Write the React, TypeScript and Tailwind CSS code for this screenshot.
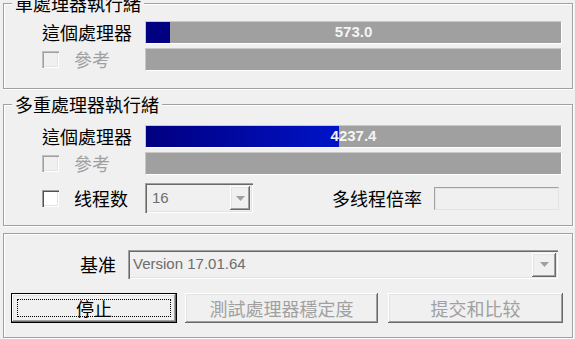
import type { ReactNode } from 'react';

const cjk = "font-['Noto_Sans_CJK_TC','Noto_Sans_CJK_SC',sans-serif]";
const latin = "font-['Liberation_Sans',Arial,sans-serif]";

const etched = 'border border-[#a0a0a0] shadow-[inset_1px_1px_0_#fff,1px_1px_0_#fff]';
const sunken =
  'shadow-[inset_1px_1px_0_#a0a0a0,inset_2px_2px_0_#696969,inset_-1px_-1px_0_#fff,inset_-2px_-2px_0_#e3e3e3]';
const raised =
  'shadow-[inset_-1px_-1px_0_#696969,inset_1px_1px_0_#fff,inset_-2px_-2px_0_#a0a0a0,inset_2px_2px_0_#e3e3e3]';

function Group({ title, className, children }: { title: string; className: string; children: ReactNode }) {
  return (
    <div className={`relative ml-[3px] w-[570px] ${etched} ${className}`}>
      <span className={`absolute left-[8px] top-[-10px] bg-[#f0f0f0] px-[3px] text-[18px] leading-[18px] text-black ${cjk}`}>
        {title}
      </span>
      {children}
    </div>
  );
}

function Bar({ value, pct, gradient }: { value?: string; pct?: number; gradient?: boolean }) {
  return (
    <div className="relative h-[23px] w-[417px] border border-t-[#c8c8c8] border-l-[#c8c8c8] border-r-white border-b-white bg-[#a0a0a0]">
      {pct ? (
        <div
          className={`absolute inset-y-0 left-0 ${gradient ? 'bg-gradient-to-r from-[#000080] to-[#0014c8]' : 'bg-[#000080]'}`}
          style={{ width: `${pct}%` }}
        />
      ) : null}
      {value ? (
        <span className={`absolute inset-0 flex items-center justify-center text-[15px] font-bold text-[#f4f4f4] ${latin}`}>
          {value}
        </span>
      ) : null}
    </div>
  );
}

function Check({ enabled }: { enabled?: boolean }) {
  return (
    <div
      className={`h-[17px] w-[17px] ${enabled ? 'bg-white' : 'bg-[#f0f0f0]'} ${
        enabled
          ? 'shadow-[inset_1px_1px_0_#a0a0a0,inset_2px_2px_0_#505050,inset_-1px_-1px_0_#fff,inset_-2px_-2px_0_#e3e3e3]'
          : 'shadow-[inset_1px_1px_0_#c0c0c0,inset_2px_2px_0_#a0a0a0,inset_-1px_-1px_0_#fff,inset_-2px_-2px_0_#e3e3e3]'
      }`}
    />
  );
}

function DropButton({ className }: { className: string }) {
  return (
    <div className={`flex items-center justify-center bg-[#f0f0f0] ${raised} ${className}`}>
      <svg width="9" height="5" viewBox="0 0 9 5">
        <polygon points="0,0 9,0 4.5,5" fill="#a0a0a0" />
      </svg>
    </div>
  );
}

function ProcRows({ value, pct, gradient }: { value: string; pct: number; gradient?: boolean }) {
  return (
    <div className="flex flex-col gap-[4px] pl-[38px]">
      <div className="flex items-center">
        <span className={`w-[103px] text-[18px] leading-[23px] text-black ${cjk}`}>這個處理器</span>
        <Bar value={value} pct={pct} gradient={gradient} />
      </div>
      <div className="flex items-center">
        <div className="flex w-[103px] items-center gap-[15px]">
          <Check />
          <span className={`text-[18px] leading-[23px] text-[#a0a0a0] ${cjk}`}>參考</span>
        </div>
        <Bar />
      </div>
    </div>
  );
}

export default function App() {
  return (
    <div className={`h-[339px] w-[575px] overflow-hidden bg-[#f0f0f0] pt-[3px] ${cjk}`}>
      <Group title="單處理器執行緒" className="h-[86px] pt-[17px]">
        <ProcRows value="573.0" pct={5.8} />
      </Group>

      <Group title="多重處理器執行緒" className="mt-[15px] h-[122px] pt-[20px]">
        <ProcRows value="4237.4" pct={46.5} gradient />
        <div className="mt-[8px] flex items-center pl-[38px]">
          <div className="flex w-[103px] items-center gap-[15px]">
            <Check enabled />
            <span className="text-[18px] leading-[23px] text-black">线程数</span>
          </div>
          <div className={`flex h-[30px] w-[108px] items-center justify-between bg-[#f0f0f0] pl-[7px] pr-[3px] ${sunken}`}>
            <span className={`text-[15px] text-[#6d6d6d] ${latin}`}>16</span>
            <DropButton className="h-[24px] w-[20px]" />
          </div>
          <span className="ml-[79px] text-[18px] leading-[23px] text-black">多线程倍率</span>
          <div className="ml-[12px] h-[23px] w-[125px] border border-t-[#a0a0a0] border-l-[#a0a0a0] border-r-[#e3e3e3] border-b-[#e3e3e3] bg-[#f0f0f0] shadow-[inset_1px_1px_0_#e3e3e3]" />
        </div>
      </Group>

      <div className={`ml-[3px] mt-[7px] h-[105px] w-[570px] pt-[16px] ${etched}`}>
        <div className="flex items-center pl-[76px]">
          <span className="text-[18px] leading-[23px] text-black">基准</span>
          <div className={`ml-[12px] flex h-[29px] w-[430px] items-center justify-between bg-[#f0f0f0] pl-[5px] pr-[2px] ${sunken}`}>
            <span className={`text-[15px] text-[#6d6d6d] ${latin}`}>Version 17.01.64</span>
            <DropButton className="h-[24px] w-[24px]" />
          </div>
        </div>
        <div className="mt-[14px] flex items-center pl-[7px]">
          <button className={`relative flex h-[30px] w-[166px] items-center justify-center border border-black bg-[#f0f0f0] ${raised}`}>
            <span className="pointer-events-none absolute inset-[5px] border border-dotted border-black" />
            <span className="text-[18px] leading-[20px] text-black">停止</span>
          </button>
          <button className={`ml-[8px] flex h-[30px] w-[193px] items-center justify-center bg-[#f0f0f0] ${raised}`}>
            <span className="text-[18px] leading-[20px] text-[#a0a0a0]">測試處理器穩定度</span>
          </button>
          <button className={`ml-[10px] flex h-[30px] w-[175px] items-center justify-center bg-[#f0f0f0] ${raised}`}>
            <span className="text-[18px] leading-[20px] text-[#a0a0a0]">提交和比较</span>
          </button>
        </div>
      </div>
    </div>
  );
}
